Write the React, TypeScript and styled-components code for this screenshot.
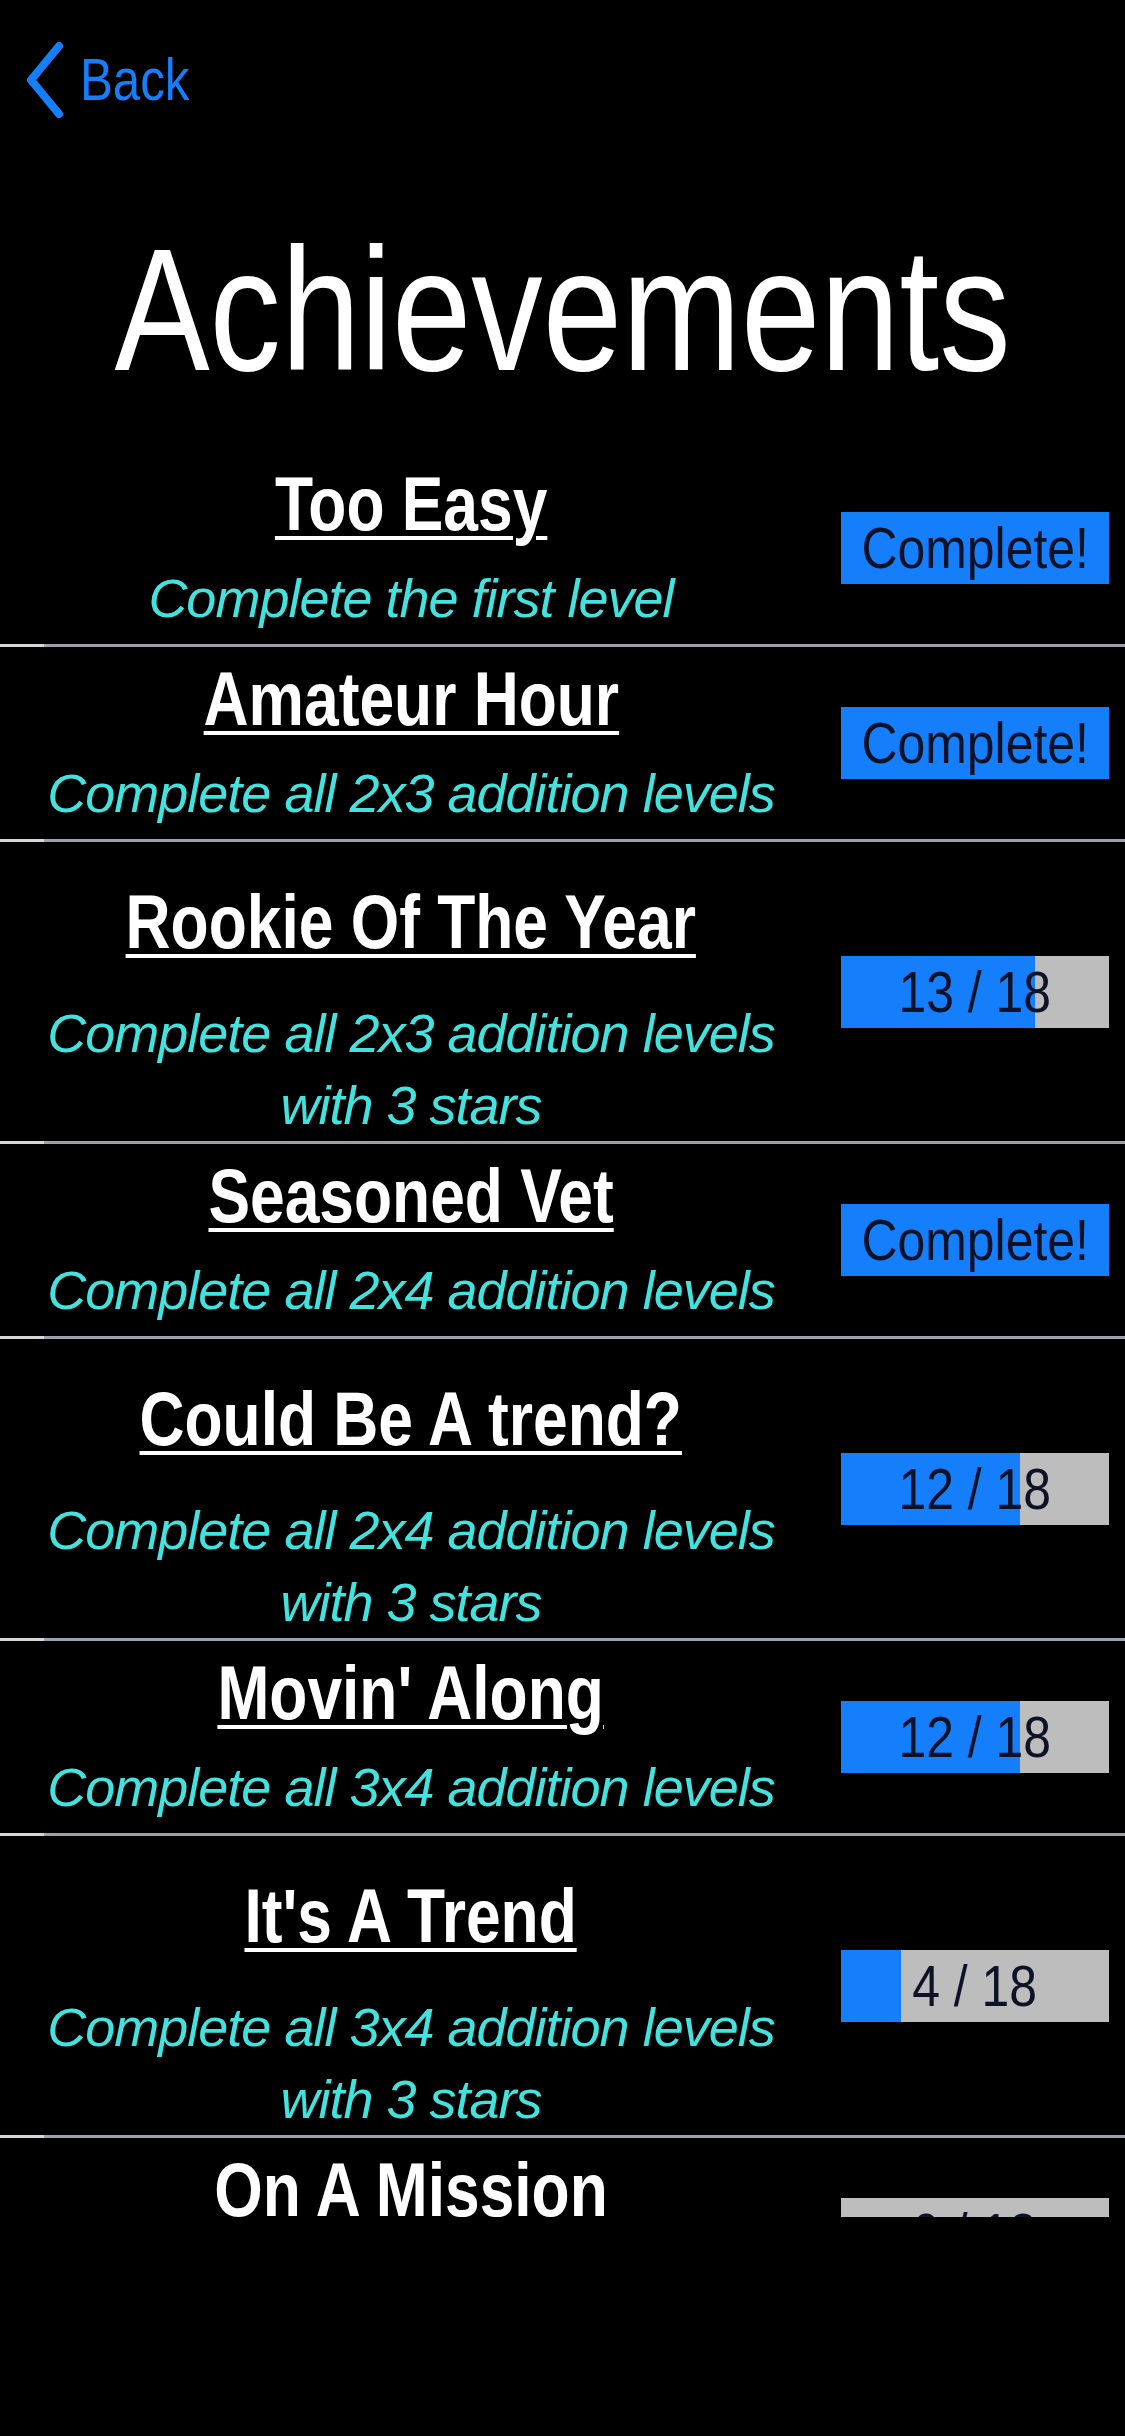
import React from 'react'
import styled, { createGlobalStyle } from 'styled-components'

const GlobalStyle = createGlobalStyle`
  html, body {
    margin: 0;
    padding: 0;
    background: #000;
  }
  body {
    font-family: "Liberation Sans", Arial, sans-serif;
  }
`

const blue = '#157efb'
const cyan = '#42e2de'

// the app's type is tall and narrow; squeeze Liberation Sans to match it
const condensed = 'scaleX(0.82)'

const Screen = styled.div`
  width: 1125px;
  min-height: 2436px;
  background: #000;
  display: flex;
  flex-direction: column;
`

const NavBar = styled.div`
  height: 100px;
  margin-top: 30px;
  padding-left: 27px;
  display: flex;
  align-items: center;
  gap: 17px;
  color: ${blue};
`

const BackLabel = styled.span`
  font-size: 60px;
  line-height: 60px;
  transform: ${condensed};
  transform-origin: left center;
`

const PageTitle = styled.h1`
  margin: 93px 0 55px;
  font-weight: 400;
  font-size: 174px;
  line-height: 174px;
  color: #fff;
  text-align: center;
  white-space: nowrap;
  transform: ${condensed};
`

const List = styled.div`
  height: 1765px;
  overflow: hidden;
`

const Row = styled.div<{ $tall: boolean }>`
  display: grid;
  grid-template-columns: 822px 1fr;
  height: ${p => (p.$tall ? 299 : 192)}px;
`

const TextColumn = styled.div<{ $tall: boolean }>`
  display: flex;
  flex-direction: column;
  align-items: center;
  gap: ${p => (p.$tall ? 35 : 18)}px;
  padding: ${p => (p.$tall ? '40px 20px 0' : '12px 20px 10px')};
  text-align: center;
`

const Title = styled.div`
  font-weight: 700;
  font-size: 76px;
  line-height: 80px;
  color: #fff;
  text-decoration: underline;
  text-decoration-thickness: 4px;
  text-underline-offset: 6px;
  white-space: nowrap;
  transform: ${condensed};
`

const Description = styled.div`
  font-style: italic;
  font-size: 54px;
  line-height: 72px;
  letter-spacing: -1px;
  color: ${cyan};
`

const StatusColumn = styled.div`
  display: flex;
  align-items: center;
  justify-content: flex-end;
  padding-right: 16px;
`

const Bar = styled.div<{ $done: boolean }>`
  position: relative;
  width: 268px;
  height: 72px;
  background: ${p => (p.$done ? blue : '#bdbdbd')};
  display: flex;
  align-items: center;
  justify-content: center;
  overflow: hidden;
`

const Fill = styled.div`
  position: absolute;
  left: 0;
  top: 0;
  bottom: 0;
  background: ${blue};
`

const BarLabel = styled.span`
  position: relative;
  font-size: 58px;
  line-height: 60px;
  color: #0d1226;
  white-space: nowrap;
  transform: scaleX(0.86);
`

const Separator = styled.div`
  height: 3px;
  background: #9ca1b0;
  display: flex;

  &::before {
    content: '';
    width: 44px;
    background: #d6d6d6;
  }
`

type Achievement = {
  title: string
  description: string
  done: number
  total: number
  lines: 1 | 2
}

const achievements: Achievement[] = [
  { title: 'Too Easy', description: 'Complete the first level', done: 1, total: 1, lines: 1 },
  { title: 'Amateur Hour', description: 'Complete all 2x3 addition levels', done: 6, total: 6, lines: 1 },
  { title: 'Rookie Of The Year', description: 'Complete all 2x3 addition levels with 3 stars', done: 13, total: 18, lines: 2 },
  { title: 'Seasoned Vet', description: 'Complete all 2x4 addition levels', done: 6, total: 6, lines: 1 },
  { title: 'Could Be A trend?', description: 'Complete all 2x4 addition levels with 3 stars', done: 12, total: 18, lines: 2 },
  { title: "Movin' Along", description: 'Complete all 3x4 addition levels', done: 12, total: 18, lines: 1 },
  { title: "It's A Trend", description: 'Complete all 3x4 addition levels with 3 stars', done: 4, total: 18, lines: 2 },
  { title: 'On A Mission', description: 'Complete all 3x5 addition levels', done: 0, total: 18, lines: 1 },
]

function BackChevron() {
  return (
    <svg width="36" height="76" viewBox="0 0 36 76" fill="none">
      <polyline
        points="32,4 4,38 32,72"
        stroke={blue}
        strokeWidth="8"
        strokeLinecap="round"
        strokeLinejoin="round"
      />
    </svg>
  )
}

function Progress({ done, total }: { done: number; total: number }) {
  const complete = done >= total
  return (
    <Bar $done={complete}>
      {!complete && <Fill style={{ width: `${(done / total) * 100}%` }} />}
      <BarLabel>{complete ? 'Complete!' : `${done} / ${total}`}</BarLabel>
    </Bar>
  )
}

export default function App() {
  return (
    <>
      <GlobalStyle />
      <Screen>
        <NavBar>
          <BackChevron />
          <BackLabel>Back</BackLabel>
        </NavBar>
        <PageTitle>Achievements</PageTitle>
        <List>
          {achievements.map((a, i) => (
            <React.Fragment key={a.title}>
              {i > 0 && <Separator />}
              <Row $tall={a.lines === 2}>
                <TextColumn $tall={a.lines === 2}>
                  <Title>{a.title}</Title>
                  <Description>{a.description}</Description>
                </TextColumn>
                <StatusColumn>
                  <Progress done={a.done} total={a.total} />
                </StatusColumn>
              </Row>
            </React.Fragment>
          ))}
        </List>
      </Screen>
    </>
  )
}
